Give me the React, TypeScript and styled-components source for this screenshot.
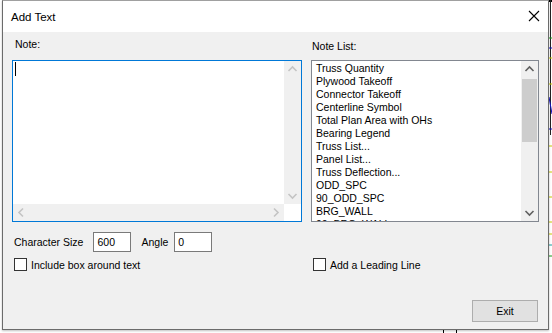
import React from "react";
import styled, { createGlobalStyle } from "styled-components";

const GlobalStyle = createGlobalStyle`
  html, body { margin: 0; padding: 0; background: #ffffff; }
  body { font-family: "Liberation Sans", Arial, sans-serif; }
`;

const notes = [
  "Truss Quantity",
  "Plywood Takeoff",
  "Connector Takeoff",
  "Centerline Symbol",
  "Total Plan Area with OHs",
  "Bearing Legend",
  "Truss List...",
  "Panel List...",
  "Truss Deflection...",
  "ODD_SPC",
  "90_ODD_SPC",
  "BRG_WALL",
  "90_BRG_WALL",
];

function App() {
  return (
    <React.Fragment>
      <GlobalStyle />
      <Screen>
        <Backdrop width="552" height="333" viewBox="0 0 552 333">
          <line x1="443.5" y1="0" x2="443.5" y2="333" stroke="#000" />
          <line x1="456.5" y1="0" x2="456.5" y2="333" stroke="#000" />
          <rect x="495" y="0" width="57" height="2" fill="#000" />
          <line x1="550.5" y1="0" x2="550.5" y2="135" stroke="#222" />
          <line x1="549" y1="38" x2="552" y2="38" stroke="#1a9a1a" />
          <line x1="549" y1="48" x2="552" y2="48" stroke="#1010c0" />
          <line x1="549" y1="58" x2="552" y2="58" stroke="#c8c800" />
          <line x1="549" y1="84" x2="552" y2="84" stroke="#c8c800" />
          <line x1="549" y1="97" x2="552" y2="114" stroke="#1010c0" />
          <line x1="549" y1="129" x2="552" y2="129" stroke="#1010c0" />
          <line x1="549" y1="146" x2="552" y2="146" stroke="#c8c800" />
          <line x1="549" y1="172" x2="552" y2="172" stroke="#c8c800" />
          <line x1="549" y1="197" x2="552" y2="197" stroke="#c8c800" />
          <line x1="549" y1="222" x2="552" y2="222" stroke="#c8c800" />
          <line x1="549" y1="234" x2="552" y2="234" stroke="#c8c800" />
          <line x1="549" y1="245" x2="552" y2="245" stroke="#18a0a0" />
          <line x1="549" y1="256" x2="552" y2="256" stroke="#1a9a1a" />
        </Backdrop>
        <Window>
          <TitleBar>
            <Title>Add Text</Title>
            <CloseIcon width="12" height="12" viewBox="0 0 12 12">
              <path d="M1 1 L11 11 M11 1 L1 11" stroke="#000" strokeWidth="1.1" fill="none" />
            </CloseIcon>
          </TitleBar>
          <Body>
            <Columns>
              <Label $indent={3}>Note:</Label>
              <Label $indent={1} $drop={2}>Note List:</Label>

              <NoteBox>
                <EditArea>
                  <Caret />
                </EditArea>
                <VScroll>
                  <Arrow dir="up" color="#c4c4c4" />
                  <Track />
                  <Arrow dir="down" color="#c4c4c4" />
                </VScroll>
                <HScroll>
                  <Arrow dir="left" color="#c4c4c4" />
                  <Track />
                  <Arrow dir="right" color="#c4c4c4" />
                </HScroll>
                <Corner />
              </NoteBox>

              <ListBox>
                <Items>
                  {notes.map((n) => (
                    <Item key={n}>{n}</Item>
                  ))}
                </Items>
                <ListScroll>
                  <Arrow dir="up" color="#606060" />
                  <ThumbTrack>
                    <Thumb />
                  </ThumbTrack>
                  <Arrow dir="down" color="#606060" />
                </ListScroll>
              </ListBox>

              <SizeRow>
                <FieldLabel $right={10}>Character Size</FieldLabel>
                <Field>600</Field>
                <FieldLabel $left={10} $right={6}>Angle</FieldLabel>
                <Field>0</Field>
              </SizeRow>
              <Spacer />

              <CheckRow>
                <Box />
                <span>Include box around text</span>
              </CheckRow>
              <CheckRow>
                <Box />
                <span>Add a Leading Line</span>
              </CheckRow>
            </Columns>
            <Footer>
              <Button>Exit</Button>
            </Footer>
          </Body>
        </Window>
      </Screen>
    </React.Fragment>
  );
}

function Arrow({ dir, color }: { dir: "up" | "down" | "left" | "right"; color: string }) {
  const paths: Record<string, string> = {
    up: "M4.5 10 L8.5 6 L12.5 10",
    down: "M4.5 7 L8.5 11 L12.5 7",
    left: "M10 4.5 L6 8.5 L10 12.5",
    right: "M7 4.5 L11 8.5 L7 12.5",
  };
  return (
    <ArrowBox width="17" height="17" viewBox="0 0 17 17">
      <path d={paths[dir]} stroke={color} strokeWidth="1.6" fill="none" />
    </ArrowBox>
  );
}

export default App;

const Screen = styled.div`
  position: relative;
  width: 552px;
  height: 333px;
  overflow: hidden;
  background: #ffffff;
`;

const Backdrop = styled.svg`
  position: absolute;
  left: 0;
  top: 0;
`;

const Window = styled.div`
  position: relative;
  margin-left: 2px;
  width: 547px;
  height: 330px;
  box-sizing: border-box;
  border: 1px solid #6b6b6b;
  border-top-color: #a0a0a0;
  background: #f0f0f0;
  display: flex;
  flex-direction: column;
  box-shadow: 0 1px 2px rgba(0, 0, 0, 0.25);
  font-size: 10.5px;
  color: #000;
`;

const TitleBar = styled.div`
  height: 31px;
  background: #ffffff;
  display: flex;
  align-items: center;
  justify-content: space-between;
  padding: 0 8px 0 8px;
`;

const Title = styled.span`
  font-size: 11.5px;
  color: #000;
`;

const CloseIcon = styled.svg`
  display: block;
  margin-top: -1px;
`;

const Body = styled.div`
  flex: 1;
  display: flex;
  flex-direction: column;
  padding: 6px 9px 7px 9px;
`;

const Columns = styled.div`
  display: grid;
  grid-template-columns: 290px 228px;
  column-gap: 9px;
  align-items: start;
`;

const Label = styled.div<{ $drop?: number; $indent: number }>`
  line-height: 13px;
  height: 13px;
  padding: ${(p) => p.$drop || 0}px 0 0 ${(p) => p.$indent}px;
  margin-bottom: ${(p) => 9 - (p.$drop || 0)}px;
`;

const NoteBox = styled.div`
  height: 162px;
  box-sizing: border-box;
  border: 1px solid #0078d7;
  background: #ffffff;
  display: grid;
  grid-template-columns: 1fr 17px;
  grid-template-rows: 1fr 17px;
`;

const EditArea = styled.div`
  background: #ffffff;
  padding: 1px 2px;
`;

const Caret = styled.div`
  width: 1px;
  height: 14px;
  background: #000;
`;

const VScroll = styled.div`
  background: #f0f0f0;
  display: flex;
  flex-direction: column;
`;

const HScroll = styled.div`
  background: #f0f0f0;
  display: flex;
`;

const Track = styled.div`
  flex: 1;
`;

const Corner = styled.div`
  background: #ffffff;
`;

const ArrowBox = styled.svg`
  display: block;
  flex: none;
`;

const ListBox = styled.div`
  height: 162px;
  box-sizing: border-box;
  border: 1px solid #828790;
  background: #ffffff;
  display: flex;
  overflow: hidden;
`;

const Items = styled.div`
  flex: 1;
  padding: 1px 0 0 4px;
  overflow: hidden;
`;

const Item = styled.div`
  line-height: 13px;
  height: 13px;
  white-space: nowrap;
`;

const ListScroll = styled.div`
  width: 17px;
  background: #f0f0f0;
  display: flex;
  flex-direction: column;
`;

const ThumbTrack = styled.div`
  flex: 1;
  padding-top: 1px;
`;

const Thumb = styled.div`
  height: 63px;
  margin: 0 1px;
  background: #cdcdcd;
`;

const SizeRow = styled.div`
  margin-top: 10px;
  padding-left: 2px;
  display: flex;
  align-items: center;
  height: 20px;
`;

const Spacer = styled.div``;

const FieldLabel = styled.span<{ $left?: number; $right: number }>`
  margin-left: ${(p) => p.$left || 0}px;
  margin-right: ${(p) => p.$right}px;
`;

const Field = styled.div`
  width: 38px;
  height: 20px;
  box-sizing: border-box;
  border: 1px solid #7a7a7a;
  background: #ffffff;
  padding-left: 3px;
  line-height: 18px;
`;

const CheckRow = styled.label`
  margin-top: 6px;
  display: flex;
  align-items: center;
  gap: 4px;
  height: 13px;
  padding-left: 2px;
`;

const Box = styled.span`
  width: 13px;
  height: 13px;
  box-sizing: border-box;
  border: 1px solid #333333;
  background: #ffffff;
`;

const Footer = styled.div`
  margin-top: auto;
  display: flex;
  justify-content: flex-end;
  padding-right: 1px;
`;

const Button = styled.div`
  width: 66px;
  height: 22px;
  box-sizing: border-box;
  border: 1px solid #adadad;
  background: #e1e1e1;
  display: flex;
  align-items: center;
  justify-content: center;
`;
